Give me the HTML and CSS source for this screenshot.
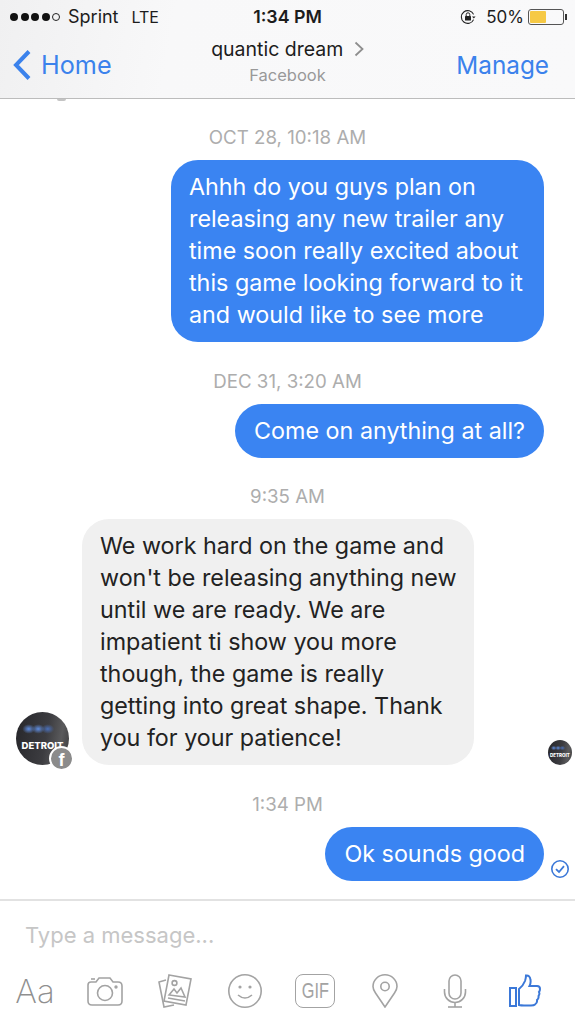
FILE: index.html
```html
<!DOCTYPE html>
<html lang="en">
<head>
    <meta charset="UTF-8">
    <meta name="viewport" content="width=device-width, initial-scale=1.0">
    <title>quantic dream</title>
    <link rel="stylesheet" href="styles.css">
</head>
<body>
    <div class="app-container">
        <header>
            <div class="status-bar">
                <div class="status-left">
                    <span class="signal"><i></i><i></i><i></i><i></i><i class="empty"></i></span>
                    <span class="carrier">Sprint</span>
                    <span class="network">LTE</span>
                </div>
                <div class="clock">1:34 PM</div>
                <div class="status-right">
                    <svg class="lock-icon" viewBox="0 0 16 16" width="16" height="16">
                        <path d="M13.6 5.4 A6.4 6.4 0 1 0 13.6 10.6" fill="none" stroke="#222" stroke-width="1.1"/>
                        <path d="M12 7.4 L15.6 7.4 L13.8 9.6 Z" fill="#222"/>
                        <rect x="5" y="7" width="6" height="4.6" rx="0.6" fill="#222"/>
                        <path d="M6.2 7 V5.6 A1.8 1.8 0 0 1 9.8 5.6 V7" fill="none" stroke="#222" stroke-width="1"/>
                    </svg>
                    <span class="percent">50%</span>
                    <span class="battery"><span class="battery-level"></span></span>
                    <span class="battery-nub"></span>
                </div>
            </div>
            <nav class="nav-bar">
                <a class="back">
                    <svg viewBox="0 0 20 32" width="20" height="32">
                        <path d="M17 2.5 L4 16 L17 29.5" fill="none" stroke="#3b82ec" stroke-width="4"/>
                    </svg>
                    <span>Home</span>
                </a>
                <div class="title">
                    <div class="title-name">quantic dream
                        <svg viewBox="0 0 10 16" width="10" height="16">
                            <path d="M1.5 1.5 L8.5 8 L1.5 14.5" fill="none" stroke="#8e8e8e" stroke-width="1.8"/>
                        </svg>
                    </div>
                    <div class="title-sub">Facebook</div>
                </div>
                <a class="manage">Manage</a>
            </nav>
        </header>

        <main class="thread">
            <span class="scrolled-off"></span>

            <div class="stamp">OCT 28, 10:18 AM</div>
            <div class="row outgoing">
                <div class="bubble blue wide">Ahhh do you guys plan on releasing any new trailer any time soon really excited about this game looking forward to it and would like to see more</div>
            </div>

            <div class="stamp">DEC 31, 3:20 AM</div>
            <div class="row outgoing">
                <div class="bubble blue">Come on anything at all?</div>
            </div>

            <div class="stamp">9:35 AM</div>
            <div class="row incoming">
                <div class="avatar">
                    <div class="avatar-pic"><span>DETROIT</span></div>
                    <div class="fb-badge">f</div>
                </div>
                <div class="bubble grey">We work hard on the game and won't be releasing anything new until we are ready. We are impatient ti show you more though, the game is really getting into great shape. Thank you for your patience!</div>
                <div class="seen-pic"><span>DETROIT</span></div>
            </div>

            <div class="stamp">1:34 PM</div>
            <div class="row outgoing">
                <div class="bubble blue">Ok sounds good</div>
                <svg class="sent-check" viewBox="0 0 20 20" width="20" height="20">
                    <circle cx="10" cy="10" r="8.2" fill="none" stroke="#3b78d8" stroke-width="1.6"/>
                    <path d="M6 10.2 L9 13 L14 7.2" fill="none" stroke="#3b78d8" stroke-width="1.8"/>
                </svg>
            </div>
        </main>

        <footer>
            <div class="composer">Type a message...</div>
            <div class="toolbar">
                <div class="tool aa">Aa</div>
                <div class="tool">
                    <svg viewBox="0 0 36 30" width="36" height="30" class="line">
                        <path d="M4 6 H9 L12 2 H23 L26 6 H31 Q35 6 35 10 V25 Q35 29 31 29 H5 Q1 29 1 25 V9 Q1 6 4 6 Z"/>
                        <circle cx="18" cy="17" r="7.5"/>
                        <circle cx="29" cy="11" r="0.9" fill="#a3a3a3"/>
                        <path d="M4 3 H8"/>
                    </svg>
                </div>
                <div class="tool">
                    <svg viewBox="0 0 34 34" width="34" height="34" class="line">
                        <path d="M8 6 L1 8 L6 33 L16 31"/>
                        <path d="M11 1 L33 5 L28 31 L6 27 Z"/>
                        <circle cx="16.5" cy="9" r="2.4"/>
                        <path d="M11 21 L16 15 L19 19 L23 14 L27 23 Z"/>
                        <path d="M10 24 L27 27"/>
                    </svg>
                </div>
                <div class="tool">
                    <svg viewBox="0 0 34 34" width="34" height="34" class="line">
                        <circle cx="17" cy="17" r="16.2"/>
                        <circle cx="12" cy="13" r="0.8" fill="#a3a3a3"/>
                        <circle cx="22" cy="13" r="0.8" fill="#a3a3a3"/>
                        <path d="M10 21 Q17 27 24 21"/>
                    </svg>
                </div>
                <div class="tool">
                    <div class="gif-box"><span>GIF</span></div>
                </div>
                <div class="tool">
                    <svg viewBox="0 0 26 34" width="26" height="34" class="line">
                        <path d="M13 33 L3.5 19 Q1 15.5 1 12.5 A12 11.7 0 0 1 25 12.5 Q25 15.5 22.5 19 Z"/>
                        <circle cx="13" cy="12.5" r="4.2"/>
                    </svg>
                </div>
                <div class="tool">
                    <svg viewBox="0 0 24 34" width="24" height="34" class="line">
                        <rect x="6" y="1" width="12" height="24" rx="6"/>
                        <path d="M1.5 15 V18 A10.5 10.5 0 0 0 22.5 18 V15"/>
                        <path d="M12 28.5 V33"/>
                        <path d="M5 33 H19"/>
                    </svg>
                </div>
                <div class="tool">
                    <svg viewBox="0 0 32 34" width="32" height="34" class="thumb">
                        <rect x="1" y="14" width="6" height="18"/>
                        <path d="M10 31 V15 Q14 12 16 7 Q17 4 17 1.5 Q21 1 21.5 6 Q22 9 20.5 12 H28 Q31 12 31 15 Q31 17 30 18 Q31 20 29.5 22 Q30 24.5 28 26 Q28.5 29 26 30.5 Q25 31.5 22 31.5 H15 Q12 31.5 10 31 Z"/>
                    </svg>
                </div>
            </div>
        </footer>
    </div>
</body>
</html>
```

FILE: styles.css
```css
* {
    box-sizing: border-box;
}
body {
    font-family: Inter, "Liberation Sans", sans-serif;
    margin: 0;
    padding: 0;
    background: white;
}
.app-container {
    width: 575px;
    height: 1024px;
    display: flex;
    flex-direction: column;
    overflow: hidden;
}

/* top bars */
header {
    height: 99px;
    background: linear-gradient(100deg, #f0f0f1 0%, #f8f8f9 30%, #f9f9fa 100%);
    border-bottom: 1px solid #bcbcbc;
    position: relative;
    z-index: 2;
}
.status-bar {
    height: 33px;
    padding: 0 8px 0 10px;
    display: flex;
    align-items: center;
    justify-content: space-between;
    color: #1c1c1c;
    font-size: 17px;
    position: relative;
}
.status-left {
    display: flex;
    align-items: center;
}
.signal {
    display: flex;
    gap: 2.5px;
    margin-right: 8px;
}
.signal i {
    width: 8px;
    height: 8px;
    border-radius: 50%;
    background: #111;
}
.signal i.empty {
    background: none;
    border: 1px solid #222;
}
.carrier {
    font-size: 18px;
}
.network {
    margin-left: 13px;
    font-size: 16px;
}
.clock {
    position: absolute;
    left: 0;
    right: 0;
    text-align: center;
    font-weight: 600;
    font-size: 17.8px;
}
.status-right {
    display: flex;
    align-items: center;
}
.lock-icon {
    margin-right: 10px;
}
.percent {
    margin-right: 4px;
}
.battery {
    width: 36px;
    height: 16px;
    border: 1px solid #555;
    border-radius: 3px;
    padding: 1px;
    display: block;
}
.battery-level {
    display: block;
    width: 50%;
    height: 100%;
    background: #f6c945;
    border-radius: 1px;
}
.battery-nub {
    width: 2px;
    height: 6px;
    background: #333;
    margin-left: 1px;
}
.nav-bar {
    height: 65px;
    padding: 0 26px 2px 12px;
    display: flex;
    align-items: center;
    justify-content: space-between;
    position: relative;
}
.back {
    display: flex;
    align-items: center;
    gap: 9px;
    color: #3b82ec;
    font-size: 25.2px;
}
.manage {
    color: #3b82ec;
    font-size: 24.3px;
}
.title {
    position: absolute;
    left: 0;
    right: 0;
    top: 3px;
    text-align: center;
}
.title-name {
    font-size: 19.5px;
    color: #1c1c1c;
    line-height: 26px;
}
.title-name svg {
    margin-left: 5px;
    vertical-align: -1px;
}
.title-sub {
    font-size: 16.5px;
    color: #999;
    line-height: 24px;
    padding-top: 1px;
}

/* messages */
.thread {
    flex: 1;
    padding-top: 29px;
    position: relative;
}
.scrolled-off {
    position: absolute;
    left: 57px;
    top: 0;
    width: 9px;
    height: 2px;
    background: #c4c4c4;
    border-radius: 0 0 4px 4px;
}
.stamp {
    height: 20px;
    line-height: 20px;
    text-align: center;
    font-size: 18.7px;
    color: #adadad;
    margin-bottom: 12px;
}
.row {
    display: flex;
    align-items: flex-end;
    margin-bottom: 29.5px;
    position: relative;
}
.row:last-child {
    margin-bottom: 0;
}
.outgoing {
    justify-content: flex-end;
    padding-right: 31px;
}
.bubble {
    font-size: 23.3px;
    line-height: 32px;
    padding: 11px 19px;
    border-radius: 27px;
}
.blue {
    background: #3a84f2;
    color: white;
}
.wide {
    width: 373px;
    padding-left: 18px;
}
.grey {
    background: #f0f0f0;
    color: #222;
    width: 392px;
    padding: 11px 14px 11px 18px;
}
.incoming {
    padding-left: 16px;
}
.avatar {
    width: 53px;
    height: 53px;
    margin-right: 13px;
    position: relative;
}
.avatar-pic, .seen-pic {
    border-radius: 50%;
    background:
        radial-gradient(ellipse 12% 9% at 24% 32%, #5f8de0 0%, rgba(95,141,224,0) 100%),
        radial-gradient(ellipse 12% 9% at 42% 32%, #5f8de0 0%, rgba(95,141,224,0) 100%),
        radial-gradient(ellipse 12% 9% at 60% 32%, #4a6fb8 0%, rgba(74,111,184,0) 100%),
        linear-gradient(100deg, #26262a 0%, #3c3c40 55%, #5a5a5c 80%, #3a3a3c 100%);
    color: white;
    font-weight: 800;
    display: flex;
    align-items: center;
    justify-content: center;
    overflow: hidden;
}
.avatar-pic {
    width: 53px;
    height: 53px;
    font-size: 9.5px;
}
.avatar-pic span {
    margin-top: 14px;
}
.fb-badge {
    position: absolute;
    right: -3px;
    bottom: -4px;
    width: 21px;
    height: 21px;
    border-radius: 50%;
    background: #8b8b8b;
    border: 2px solid white;
    box-sizing: content-box;
    margin: -2px;
    color: white;
    font: bold 18px/25px "Liberation Sans", sans-serif;
    text-align: center;
    overflow: hidden;
}
.seen-pic {
    position: absolute;
    left: 548px;
    bottom: 0;
    width: 24px;
    height: 25px;
    font-size: 4.5px;
}
.seen-pic span {
    margin-top: 5px;
}
.sent-check {
    position: absolute;
    left: 550px;
    bottom: 2px;
}

/* composer */
footer {
    height: 125px;
    border-top: 2px solid #e2e2e2;
}
.composer {
    height: 71px;
    padding: 19px 0 0 25px;
    font-size: 22px;
    line-height: 30px;
    color: #c6c6c6;
}
.toolbar {
    display: grid;
    grid-template-columns: repeat(8, 70px);
    justify-items: center;
    align-items: center;
    height: 38px;
}
.tool {
    display: flex;
    align-items: center;
    justify-content: center;
    height: 38px;
}
.tool.aa {
    font-size: 33px;
    font-weight: 200;
    color: #8f8f8f;
}
.line {
    fill: none;
    stroke: #a3a3a3;
    stroke-width: 1.6;
}
.gif-box {
    width: 40px;
    height: 34px;
    border: 1.6px solid #a3a3a3;
    border-radius: 8px;
    display: flex;
    align-items: center;
    justify-content: center;
    color: #a3a3a3;
    font: 22px "Liberation Sans", sans-serif;
}
.gif-box span {
    transform: scaleX(0.74);
}
.thumb {
    fill: none;
    stroke: #3b78d8;
    stroke-width: 2;
}
```
